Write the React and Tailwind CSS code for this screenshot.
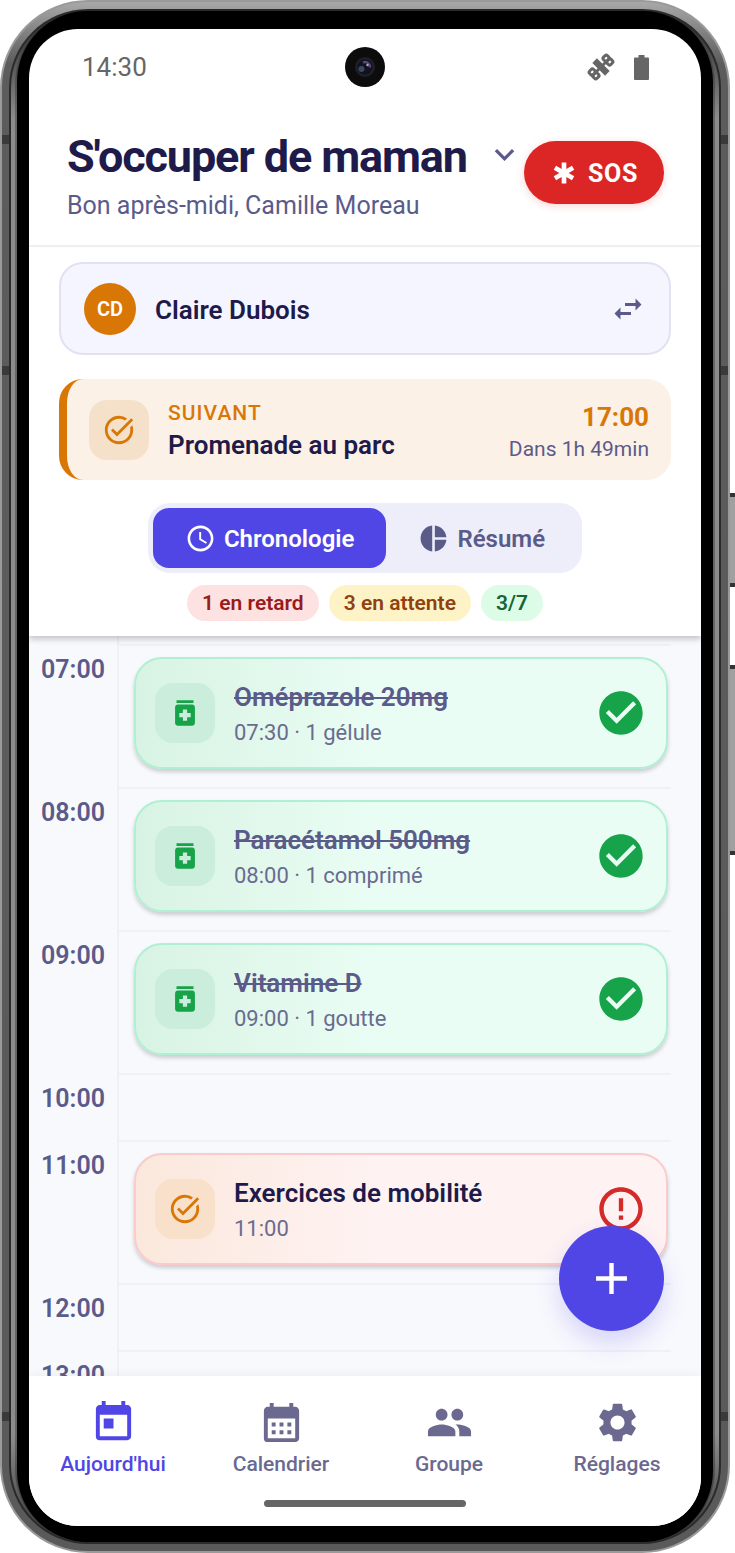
import React, { useState } from 'react';
import {
  MdAccessTime, MdAdd, MdCalendarMonth, MdCheckCircle, MdEmergency, MdErrorOutline,
  MdKeyboardArrowDown, MdMedication, MdPeople, MdPieChart, MdSettings, MdSwapHoriz,
  MdTaskAlt, MdToday,
} from 'react-icons/md';

const hours = [
  { hour: '07:00', event: { title: 'Oméprazole 20mg', detail: '07:30 · 1 gélule', done: true } },
  { hour: '08:00', event: { title: 'Paracétamol 500mg', detail: '08:00 · 1 comprimé', done: true } },
  { hour: '09:00', event: { title: 'Vitamine D', detail: '09:00 · 1 goutte', done: true } },
  { hour: '10:00' },
  { hour: '11:00', event: { title: 'Exercices de mobilité', detail: '11:00', done: false } },
  { hour: '12:00' },
  { hour: '13:00' },
];

const navItems = [
  { id: 'today', name: "Aujourd'hui", icon: <MdToday size={47} /> },
  { id: 'calendar', name: 'Calendrier', icon: <MdCalendarMonth size={47} /> },
  { id: 'group', name: 'Groupe', icon: <MdPeople size={47} /> },
  { id: 'settings', name: 'Réglages', icon: <MdSettings size={47} /> },
];

const SatelliteIcon = () => (
  <svg width="28" height="28" viewBox="0 0 28 28" fill="none" stroke="#666" strokeWidth="3">
    <g transform="rotate(-45 14 14)">
      <rect x="10.800" y="5" width="6.400" height="18" fill="#666" stroke="none" />
      <path d="M7 14h14" />
      <rect x="1.4" y="8.800" width="5.600" height="5.200" rx="1.8" />
      <rect x="1.4" y="14" width="5.600" height="5.200" rx="1.8" />
      <rect x="21" y="8.800" width="5.600" height="5.200" rx="1.8" />
      <rect x="21" y="14" width="5.600" height="5.200" rx="1.8" />
    </g>
  </svg>
);

const StatusBar = () => (
  <div className="relative h-[76px] flex items-center justify-between pl-[53px] pr-[52px] text-[#666]">
    <span className="text-[26px] leading-8">14:30</span>
    <div className="flex items-center gap-[19px]">
      <SatelliteIcon />
      <svg width="15" height="25" viewBox="0 0 15 25" fill="#666">
        <path d="M4.5 0h6v2.5H14a1 1 0 0 1 1 1V24a1 1 0 0 1-1 1H1a1 1 0 0 1-1-1V3.500a1 1 0 0 1 1-1h3.500z" />
      </svg>
    </div>
    {/* Front camera */}
    <div className="absolute left-1/2 top-[18px] -translate-x-1/2">
      <svg width="40" height="40" viewBox="0 0 40 40">
        <circle cx="20" cy="20" r="20" fill="#0c0c0d" />
        <circle cx="20" cy="20" r="10" fill="#1f2027" />
        <circle cx="20" cy="20" r="7.500" fill="#12121c" />
        <path d="M18 15.500a5 5 0 0 1 7 5" stroke="#5d4378" strokeWidth="2.500" fill="none" />
        <circle cx="16.500" cy="22" r="3" fill="#3c4668" />
        <circle cx="22.500" cy="18" r="1.200" fill="#b9a6d8" />
      </svg>
    </div>
  </div>
);

const EventCard = ({ event }) => (
  <div
    className={`h-28 flex items-center gap-[19px] rounded-[28px] border-2 pl-[19px] pr-[19px] shadow-[0_3px_4px_rgba(0,0,0,0.18)] bg-linear-to-r ${
      event.done
        ? 'border-[#b0f0d2] from-[#d8f3e3] to-[#eafdf4] to-45%'
        : 'border-[#fbcaca] from-[#fbe8dc] to-[#fef2f2] to-45%'
    }`}
  >
    <div
      className={`size-[60px] shrink-0 rounded-[18px] flex items-center justify-center ${
        event.done ? 'bg-[#caeedb] text-[#16a34a]' : 'bg-[#f8e0ca] text-[#d97706]'
      }`}
    >
      {event.done ? <MdMedication size={34} /> : <MdTaskAlt size={34} />}
    </div>
    <div className="flex-1 min-w-0 pt-1">
      <p
        className={`text-[26px] leading-9 font-semibold ${
          event.done ? 'text-[#5b5b8a] line-through' : 'text-[#1e1b4b]'
        }`}
      >
        {event.title}
      </p>
      <p className="text-[22px] leading-9 text-[#6b6b90]">{event.detail}</p>
    </div>
    {event.done ? (
      <MdCheckCircle size={52} className="shrink-0 text-[#16a34a]" />
    ) : (
      <MdErrorOutline size={52} className="shrink-0 text-[#d42a2a]" />
    )}
  </div>
);

const HourRow = ({ hour, event }) => (
  <div className="flex">
    <div className="w-[90px] shrink-0 border-r-2 border-[#f0f0f9] pt-2 text-center">
      <span className="text-[25px] leading-9 font-semibold text-[#5b5b8a]">{hour}</span>
    </div>
    <div
      className={`flex-1 mr-[30px] border-t-2 border-[#f0f0f9] pl-[15px] pr-[3px] ${
        event ? 'pt-[11px] pb-[18px]' : 'h-[67px]'
      }`}
    >
      {event && <EventCard event={event} />}
    </div>
  </div>
);

const HomeScreen = () => {
  const [view, setView] = useState('timeline');
  const [tab, setTab] = useState('today');

  const viewClass = (id) =>
    `flex items-center gap-2 px-8 h-[60px] rounded-2xl text-[24px] font-semibold ${
      view === id ? 'bg-[#4f46e5] text-white' : 'text-[#5b5b8a]'
    }`;

  return (
    <div className="relative h-full flex flex-col overflow-hidden rounded-[49px] bg-white">
      <StatusBar />

      {/* Header */}
      <header className="flex items-start justify-between border-b-2 border-[#f4f4f5] pl-[38px] pr-[37px] pt-[26px] pb-[23px]">
        <div className="flex flex-col gap-[7px]">
          <button className="flex items-start gap-[18px] whitespace-nowrap">
            <h1 className="text-[45px] leading-[52px] font-bold tracking-tight text-[#1e1b4b]">S'occuper de maman</h1>
            <MdKeyboardArrowDown size={39} className="mt-1 text-[#5b5b8a]" />
          </button>
          <p className="text-[25px] leading-8 text-[#5b5b8a]">Bon après-midi, Camille Moreau</p>
        </div>
        <button className="mt-[10px] h-[63px] shrink-0 flex items-center gap-[10px] rounded-full bg-[#dc2626] px-[26px] text-[25px] font-bold tracking-wide text-white shadow-[0_2px_8px_rgba(220,38,38,0.2)]">
          <MdEmergency size={28} /> <span className="pt-[2px]">SOS</span>
        </button>
      </header>

      {/* Summary */}
      <section className="relative z-10 flex flex-col items-center bg-white px-[30px] pt-[15px] pb-[15px] shadow-[0_3px_6px_rgba(0,0,0,0.22)]">
        <button className="w-full h-[93px] flex items-center gap-[19px] rounded-[24px] border-2 border-[#e2e1f2] bg-[#f5f5ff] pl-[23px] pr-[23px]">
          <span className="size-[52px] rounded-full bg-[#d97706] flex items-center justify-center text-[20px] font-semibold text-white">CD</span>
          <span className="flex-1 pt-1 text-left text-[26px] font-semibold text-[#1e1b4b]">Claire Dubois</span>
          <MdSwapHoriz size={36} className="text-[#5b5b8a]" />
        </button>

        <div className="mt-6 w-full h-[101px] flex items-center gap-[19px] rounded-[24px] border-l-8 border-[#d97706] bg-[#fbf1e6] pl-[22px] pr-[22px]">
          <div className="size-[60px] shrink-0 rounded-[18px] bg-[#f5e1c9] text-[#d97706] flex items-center justify-center">
            <MdTaskAlt size={34} />
          </div>
          <div className="flex-1">
            <p className="text-[21px] leading-[30px] font-medium tracking-wider text-[#d97706]">SUIVANT</p>
            <p className="text-[26px] leading-[34px] font-semibold text-[#1e1b4b]">Promenade au parc</p>
          </div>
          <div className="pt-1 text-right">
            <p className="text-[26px] leading-[34px] font-bold text-[#d97706]">17:00</p>
            <p className="text-[21px] leading-[30px] text-[#5b5b8a]">Dans 1h 49min</p>
          </div>
        </div>

        <div className="mt-[23px] flex rounded-[22px] bg-[#eeeefa] p-[5px]">
          <button className={viewClass('timeline')} onClick={() => setView('timeline')}>
            <MdAccessTime size={31} /> <span className="pt-[2px]">Chronologie</span>
          </button>
          <button className={viewClass('summary')} onClick={() => setView('summary')}>
            <MdPieChart size={31} /> <span className="pt-[2px]">Résumé</span>
          </button>
        </div>

        <div className="mt-3 flex gap-[10px] text-[21px] leading-9 font-semibold">
          <span className="rounded-full bg-[#fee2e2] px-[15px] text-[#991b1b]">1 en retard</span>
          <span className="rounded-full bg-[#fef3c7] px-[15px] text-[#92400e]">3 en attente</span>
          <span className="rounded-full bg-[#dcfce7] px-[15px] text-[#166534]">3/7</span>
        </div>
      </section>

      {/* Timeline */}
      <main className="flex-1 min-h-0 overflow-hidden bg-[#f8f9fd]">
        <div className="h-2 w-[90px] border-r-2 border-[#f0f0f9]" />
        {hours.map((row) => (
          <HourRow key={row.hour} {...row} />
        ))}
      </main>

      {/* Bottom navigation */}
      <nav className="relative flex flex-col items-center bg-white pt-[23px] pb-[19px] shadow-[0_-3px_8px_rgba(0,0,0,0.04)]">
        <div className="w-full grid grid-cols-4">
          {navItems.map((item) => (
            <a
              key={item.id}
              href={`#${item.id}`}
              onClick={() => setTab(item.id)}
              className={`flex flex-col items-center gap-1 text-[21px] leading-7 font-medium ${
                tab === item.id ? 'text-[#4f46e5]' : 'text-[#6b6990]'
              }`}
            >
              {item.icon}
              {item.name}
            </a>
          ))}
        </div>
        <div className="mt-[22px] h-[7px] w-[202px] rounded-full bg-[#666]" />
      </nav>

      <button
        aria-label="Ajouter"
        className="absolute z-20 right-[37px] bottom-[195px] size-[105px] rounded-full bg-[#4f46e5] text-white flex items-center justify-center shadow-[0_12px_24px_rgba(79,70,229,0.2)]"
      >
        <MdAdd size={53} />
      </button>
    </div>
  );
};

const App = () => (
  <div className="h-screen bg-white pr-[5px] font-['Roboto',sans-serif]">
    {/* Phone shell */}
    <div className="relative h-full">
      <div className="absolute -right-[5px] top-[493px] h-[94px] w-[6px] border-y-4 border-[#333] bg-[#a0a0a0]" />
      <div className="absolute -right-[5px] top-[665px] h-[190px] w-[6px] border-y-4 border-[#333] bg-[#a0a0a0]" />
      <div className="relative h-full rounded-[88px] border-2 border-[#9a9a9a] bg-linear-to-b from-[#a8a8a8] via-[#5c5c5c] via-4% to-[#5a5a5a] p-[7px]">
        {/* Antenna bands */}
        <div className="absolute left-0 top-[133px] h-[9px] w-[7px] bg-[#3a3a3a]" />
        <div className="absolute right-0 top-[133px] h-[9px] w-[7px] bg-[#3a3a3a]" />
        <div className="absolute left-0 top-[364px] h-[9px] w-[7px] bg-[#3a3a3a]" />
        <div className="absolute right-0 top-[364px] h-[9px] w-[7px] bg-[#3a3a3a]" />
        <div className="absolute left-0 bottom-[130px] h-[9px] w-[7px] bg-[#3a3a3a]" />
        <div className="absolute right-0 bottom-[130px] h-[9px] w-[7px] bg-[#3a3a3a]" />
        <div className="h-full rounded-[79px] bg-[#2b2b2b] p-[2px]">
          <div className="h-full rounded-[77px] bg-[linear-gradient(180deg,#222,#8c8c8c_7%,#8c8c8c_93%,#333)] px-[4px]">
            <div className="h-full rounded-[73px] bg-[linear-gradient(180deg,#222,#666_7%,#666_93%,#222)] px-[2px]">
              <div className="h-full rounded-[71px] bg-black px-[12px] pt-[18px] pb-[16px]">
                <HomeScreen />
              </div>
            </div>
          </div>
        </div>
      </div>
    </div>
  </div>
);

export default App;
